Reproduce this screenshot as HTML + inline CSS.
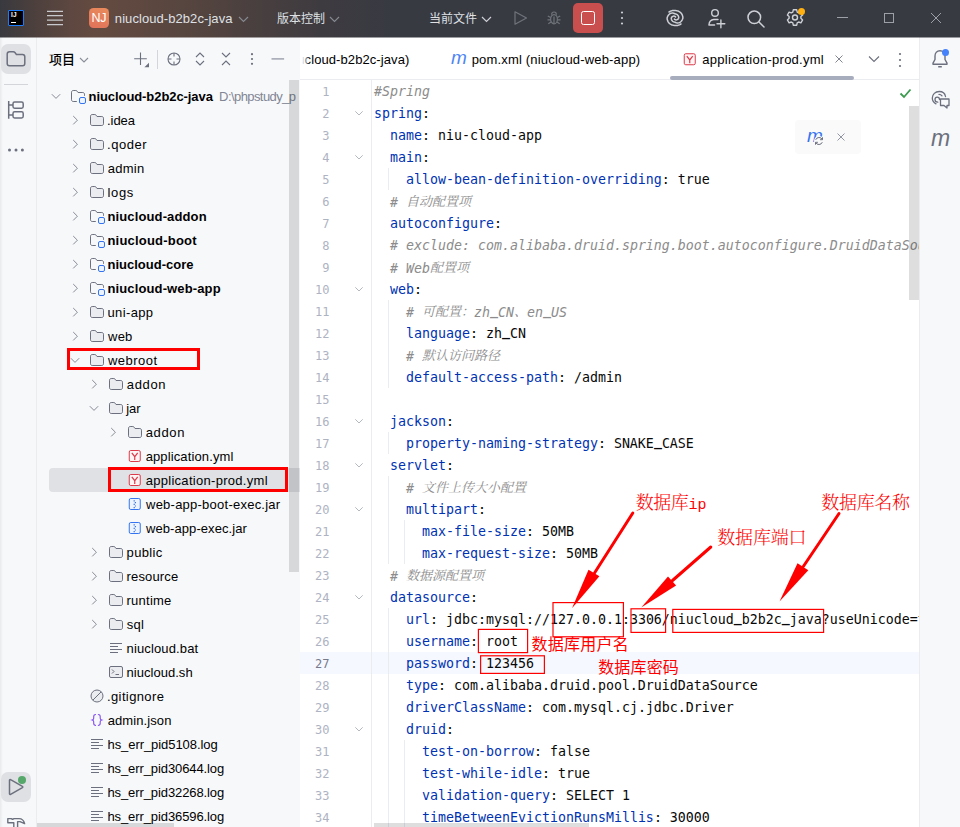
<!DOCTYPE html>
<html lang="zh-CN"><head><meta charset="utf-8"><title>niucloud-b2b2c-java – application-prod.yml</title>
<style>
*{box-sizing:border-box;margin:0;padding:0}
html,body{width:960px;height:827px;overflow:hidden;background:#fff}
body{position:relative;font-family:"Liberation Sans","Noto Sans CJK SC",sans-serif;font-size:13px;color:#000}
.abs,.ti,.tl,.ln,.cl,.fold,.guide,.sel{position:absolute}
svg{display:block;overflow:visible}
#title{position:absolute;left:0;top:0;width:960px;height:37px;background:linear-gradient(90deg,#38393f 0,#4a3f3d 30px,#5d4740 70px,#644b41 95px,#5e4840 140px,#54443f 200px,#483f3f 260px,#3e3b40 320px,#383a42 390px);color:#dfe1e5}
#title .t{position:absolute;top:0;height:38px;line-height:37px;font-size:13px;white-space:nowrap}
#tblend{position:absolute;left:0;top:37px;width:960px;height:1px;z-index:50;opacity:.5;background:linear-gradient(90deg,#38393f 0,#4a3f3d 30px,#5d4740 70px,#644b41 95px,#5e4840 140px,#54443f 200px,#483f3f 260px,#3e3b40 320px,#383a42 390px)}
#lstrip{position:absolute;left:0;top:37px;width:37px;height:790px;background:#f7f8fa;border-right:1px solid #ebecf0}
#proj{position:absolute;left:37px;top:37px;width:263px;height:790px;background:#f7f8fa;overflow:hidden}
#tree{position:absolute;left:-37px;top:-37px;width:337px;height:827px}
#editor{position:absolute;left:300px;top:37px;width:619px;height:790px;background:#fff;overflow:hidden}
#ed{position:absolute;left:-300px;top:-37px;width:919px;height:827px}
#rstrip{position:absolute;left:919px;top:37px;width:41px;height:790px;background:#f7f8fa;border-left:1px solid #ebecf0}
.tl{height:24px;line-height:25px;white-space:nowrap;font-size:13px;color:#000}
.tl.b{font-weight:bold}
.path{font-weight:normal;color:#818594}
.sel{left:49px;width:251px;height:24px;background:#dfe1e5;border-radius:4px 0 0 4px}
.ln{left:300px;width:29.500px;height:22px;line-height:22px;text-align:right;font-family:"DejaVu Sans Mono","Liberation Mono","Noto Serif CJK SC",monospace;font-size:12px;color:#aeb3c2}
.ln.cur{color:#767a8a}
.fold{left:351px}
.cl{left:374px;height:22px;line-height:22px;white-space:pre;font-family:"DejaVu Sans Mono","Liberation Mono","Noto Serif CJK SC",monospace;font-size:13.29px;color:#080808}
.k{color:#0033b3}
.u{position:relative;top:-2.500px;font-weight:bold}
.c{color:#8c8c8c;font-style:italic}
.cj{font-family:"Noto Serif CJK SC",serif;font-size:13px;position:relative;top:-1px}
.guide{width:1px;background:#ebecf0}
.red{position:absolute;border:1px solid #f00}
.red2{position:absolute;border:2px solid #f00}
.ann{position:absolute;color:#f00;white-space:nowrap}
</style></head><body>
<div id="title">
<div class="abs" style="left:8px;top:10px;width:16px;height:16px;background:#000;border:1px solid #1a7cff;border-radius:1px"></div>
<div class="abs" style="left:11px;top:12px;font:bold 6.500px/6px 'Liberation Sans',sans-serif;color:#fff;letter-spacing:.2px">IJ</div>
<div class="abs" style="left:11px;top:22px;width:5px;height:1px;background:#fff"></div>
<svg class="abs" style="left:47px;top:9px" width="16" height="18" viewBox="0 0 16 18"><path d="M0 2.300h16M0 6.700h16M0 11.100h16M0 15.600h16" stroke="#c8c9cc" stroke-width="1.300" fill="none"/></svg>
<div class="abs" style="left:89px;top:8px;width:20px;height:20px;border-radius:4.500px;background:linear-gradient(200deg,#e98b5c,#e0725a)"></div>
<div class="abs" style="left:89px;top:8px;width:20px;height:20px;line-height:21px;text-align:center;font-size:12.500px;color:#fff;letter-spacing:-.5px;text-indent:-.5px">NJ</div>
<div class="t" id="tt1" style="left:114.87px;letter-spacing:0.068px">niucloud-b2b2c-java</div>
<svg class="abs" style="left:238px;top:14px" width="11" height="10" viewBox="0 0 11 10"><path d="M1 3l4.500 4.500L10 3" fill="none" stroke="#868a91" stroke-width="1.100"/></svg>
<div class="t" id="tt2" style="left:277px;font-size:12px;top:1px">版本控制</div>
<svg class="abs" style="left:329px;top:14px" width="11" height="10" viewBox="0 0 11 10"><path d="M1 3l4.500 4.500L10 3" fill="none" stroke="#868a91" stroke-width="1.100"/></svg>
<div class="t" id="tt3" style="left:429px;font-size:12px;top:1px">当前文件</div>
<svg class="abs" style="left:481px;top:14px" width="11" height="10" viewBox="0 0 11 10"><path d="M1 3l4.500 4.500L10 3" fill="none" stroke="#ced0d6" stroke-width="1.200"/></svg>
<svg class="abs" style="left:513px;top:10px" width="16" height="16" viewBox="0 0 16 16"><path d="M2 1.800v12.400L13.500 8z" fill="none" stroke="#6f737a" stroke-width="1.200" stroke-linejoin="round"/></svg>
<svg class="abs" style="left:546px;top:10px" width="16" height="16" viewBox="0 0 16 16"><g fill="none" stroke="#6f737a" stroke-width="1.200"><ellipse cx="8" cy="9.200" rx="3.400" ry="4.600"/><path d="M5.600 4.800C5.600 3 6.600 2 8 2s2.400 1 2.400 2.800M4.600 7.500 1.800 6M11.400 7.500 14.200 6M4.600 9.800H1.500M11.400 9.800h3.100M5 12l-2.700 1.800M11 12l2.700 1.800M8 6.500v7"/></g></svg>
<div class="abs" style="left:573px;top:3px;width:30px;height:30px;border-radius:5px;background:#c94f4f"></div>
<div class="abs" style="left:581px;top:11px;width:14px;height:14px;border:1.600px solid #fff;border-radius:2.500px"></div>
<svg class="abs" style="left:620px;top:10px" width="4" height="16" viewBox="0 0 4 16"><circle cx="2" cy="2.500" r="1.100" fill="#ced0d6"/><circle cx="2" cy="8" r="1.100" fill="#ced0d6"/><circle cx="2" cy="13.500" r="1.100" fill="#ced0d6"/></svg>
<svg class="abs" style="left:667px;top:10px" width="16" height="16" viewBox="0 0 16 16"><path d="M2.03 2.00 L3.04 1.38 L4.12 0.91 L5.23 0.61 L6.35 0.46 L7.46 0.47 L8.54 0.53 L9.61 0.64 L10.66 0.90 L11.67 1.30 L12.62 1.83 L13.48 2.49 L14.23 3.28 L14.84 4.17 L15.32 5.13 L15.67 6.15 L15.86 7.20 L15.84 8.27 L15.50 9.28 L15.02 10.21 L14.43 11.04 L13.74 11.75 L12.97 12.34 L12.08 12.71 L11.15 12.88 L10.25 12.90 L9.41 12.77 L8.66 12.52 L8.00 12.17 L7.41 12.08 L6.84 11.91 L6.32 11.67 L5.83 11.36 L5.41 11.00 L5.04 10.58 L4.74 10.13 L4.52 9.65 L4.37 9.15 L4.29 8.63 L4.29 8.13 L4.47 7.64 L4.74 7.21 L5.07 6.85 L5.43 6.56 L5.82 6.35 L6.21 6.20 L6.59 6.12 L6.96 6.10 L7.30 6.14 L7.61 6.23 L7.88 6.37 L8.11 6.50 L8.30 6.63 L8.46 6.78 L8.58 6.95M13.97 14.00 L12.96 14.62 L11.88 15.09 L10.77 15.39 L9.65 15.54 L8.54 15.53 L7.46 15.47 L6.39 15.36 L5.34 15.10 L4.33 14.70 L3.38 14.17 L2.52 13.51 L1.77 12.72 L1.16 11.83 L0.68 10.87 L0.33 9.85 L0.14 8.80 L0.16 7.73 L0.50 6.72 L0.98 5.79 L1.57 4.96 L2.26 4.25 L3.03 3.66 L3.92 3.29 L4.85 3.12 L5.75 3.10 L6.59 3.23 L7.34 3.48 L8.00 3.83 L8.59 3.92 L9.16 4.09 L9.68 4.33 L10.17 4.64 L10.59 5.00 L10.96 5.42 L11.26 5.87 L11.48 6.35 L11.63 6.85 L11.71 7.37 L11.71 7.87 L11.53 8.36 L11.26 8.79 L10.93 9.15 L10.57 9.44 L10.18 9.65 L9.79 9.80 L9.41 9.88 L9.04 9.90 L8.70 9.86 L8.39 9.77 L8.12 9.63 L7.89 9.50 L7.70 9.37 L7.54 9.22 L7.42 9.05" fill="none" stroke="#ced0d6" stroke-width="1.500" stroke-linecap="round" stroke-linejoin="round"/></svg>
<svg class="abs" style="left:706px;top:7px" width="20" height="21" viewBox="0 0 20 21"><g fill="none" stroke="#ced0d6" stroke-width="1.400" stroke-linecap="round" stroke-linejoin="round"><circle cx="9" cy="5.900" r="3.300"/><path d="M8.600 18H2.900C3.200 15 5 12.700 7.800 12.500H12M11 16.750h7.800M14.900 12.900v7.800"/></g></svg>
<svg class="abs" style="left:746px;top:9px" width="20" height="20" viewBox="0 0 20 20"><g fill="none" stroke="#ced0d6" stroke-width="1.500" stroke-linecap="round"><circle cx="8.300" cy="8.300" r="6.300"/><path d="M13 13l5 5"/></g></svg>
<svg class="abs" style="left:785px;top:8px" width="20" height="20" viewBox="0 0 20 20"><g fill="none" stroke="#ced0d6" stroke-width="1.400" stroke-linejoin="round"><path d="M8.300 1.800h3.400l.5 2.300 1.500.8 2.200-.8 1.700 2.900-1.700 1.600v1.700l1.700 1.600-1.700 2.900-2.200-.8-1.500.8-.5 2.400H8.300l-.5-2.400-1.500-.8-2.200.8-1.700-2.900 1.700-1.600V8.600L2.400 7l1.700-2.900 2.200.8 1.500-.8z"/><circle cx="10" cy="9.500" r="2.500"/></g></svg>
<div class="abs" style="left:798px;top:8px;width:7px;height:7px;border-radius:50%;background:#ffaf0f"></div>
<div class="abs" style="left:837px;top:17px;width:11px;height:1px;background:#9da0a8"></div>
<div class="abs" style="left:884px;top:13px;width:10px;height:10px;border:1px solid #9da0a8"></div>
<svg class="abs" style="left:931px;top:13px" width="10" height="10" viewBox="0 0 10 10"><path d="M0 0l10 10M10 0L0 10" stroke="#9da0a8" stroke-width="1" fill="none"/></svg>
</div>

<div id="tblend"></div>
<div id="lstrip">
<div class="abs edge-shadow" style="left:0;top:0;width:3px;height:790px;background:linear-gradient(90deg,rgba(0,0,0,.06),rgba(0,0,0,0))"></div>
<div class="abs" style="left:1px;top:7px;width:30px;height:30px;border-radius:7px;background:#dfe0e4"></div>
<svg class="abs" style="left:6px;top:13px" width="20" height="18" viewBox="0 0 20 18"><path d="M1.200 4c0-1.300 1-2.300 2.300-2.300h3.800c.6 0 1.200.3 1.600.8l1.500 1.900h6.100c1.300 0 2.300 1 2.300 2.300v6.800c0 1.300-1 2.300-2.300 2.300h-13c-1.300 0-2.300-1-2.300-2.300z" fill="none" stroke="#6c707e" stroke-width="1.500"/></svg>
<div class="abs" style="left:4px;top:47px;width:24px;height:1px;background:#d3d5db"></div>
<svg class="abs" style="left:7px;top:63px" width="18" height="20" viewBox="0 0 18 20"><g fill="none" stroke="#6c707e" stroke-width="1.500"><path d="M1.700 1v17.800M1.700 4.900H6M1.700 15.100H6"/><rect x="6" y="2.100" width="10.200" height="6.100" rx="1.600"/><rect x="6" y="11.800" width="10.200" height="6.100" rx="1.600"/></g></svg>
<svg class="abs" style="left:7px;top:111px" width="18" height="4" viewBox="0 0 18 4"><circle cx="2.500" cy="2" r="1.500" fill="#6c707e"/><circle cx="9" cy="2" r="1.500" fill="#6c707e"/><circle cx="15.400" cy="2" r="1.500" fill="#6c707e"/></svg>
<div class="abs" style="left:1px;top:735px;width:30px;height:30px;border-radius:7px;background:#dfe0e4"></div>
<svg class="abs" style="left:8px;top:741px" width="17" height="18" viewBox="0 0 17 18"><path d="M1.500 2.300v13.400c0 .6.600.9 1.100.6l11.800-6.700c.5-.3.500-1 0-1.200L2.600 1.700c-.5-.3-1.100 0-1.100.6z" fill="none" stroke="#6c707e" stroke-width="1.500" stroke-linejoin="round"/></svg>
<div class="abs" style="left:18px;top:739px;width:8px;height:8px;border-radius:50%;background:#55a76a"></div>
<svg class="abs" style="left:7px;top:780px" width="19" height="12" viewBox="0 0 19 12"><path d="M6.800 11.500V5.800H.8V1.600H4.200L5.600 2.400 7 1.600H12C15 1.600 16.800 3.500 17.600 6.600L13 4.600H10.600V11.500" fill="none" stroke="#6c707e" stroke-width="1.400" stroke-linejoin="round"/></svg>
</div>

<div id="proj"><div id="tree">
<div class="abs" id="ph" style="left:49px;top:47px;height:26px;line-height:25px;font-weight:500;font-size:13px;font-family:'Liberation Sans','Noto Sans CJK SC',sans-serif">项目</div>
<svg class="abs" style="left:79px;top:55px" width="10" height="10" viewBox="0 0 10 10"><path d="M1 3l4 4 4-4" fill="none" stroke="#8a8e99" stroke-width="1.100"/></svg>
<svg class="abs" style="left:133px;top:51px" width="16" height="16" viewBox="0 0 16 16"><path d="M7.500 1.500v12.500M1.200 7.800h12.600" stroke="#6c707e" stroke-width="1.100" fill="none"/><path d="M16 11.800v4.400h-4.600z" fill="#6c707e"/></svg>
<div class="abs" style="left:157px;top:50px;width:1px;height:19px;background:#d3d5db"></div>
<svg class="abs" style="left:166px;top:51px" width="16" height="16" viewBox="0 0 16 16"><g fill="none" stroke="#6c707e" stroke-width="1.100"><circle cx="8" cy="8" r="6"/><path d="M8 2v3.500M8 10.500V14M2 8h3.500M10.500 8H14"/></g></svg>
<svg class="abs" style="left:192px;top:51px" width="16" height="16" viewBox="0 0 16 16"><path d="M4 6l4-4 4 4M4 10l4 4 4-4" fill="none" stroke="#6c707e" stroke-width="1.100"/></svg>
<svg class="abs" style="left:218px;top:51px" width="16" height="16" viewBox="0 0 16 16"><path d="M4 2l4 4 4-4M4 14l4-4 4 4" fill="none" stroke="#6c707e" stroke-width="1.100"/></svg>
<svg class="abs" style="left:250px;top:51px" width="4" height="16" viewBox="0 0 4 16"><circle cx="2" cy="3.200" r="1.100" fill="#6c707e"/><circle cx="2" cy="8" r="1.100" fill="#6c707e"/><circle cx="2" cy="12.800" r="1.100" fill="#6c707e"/></svg>
<svg class="abs" style="left:271px;top:56px" width="14" height="6" viewBox="0 0 14 6"><path d="M.5 2.900h12.600" stroke="#9a9eab" stroke-width="1.400" fill="none"/></svg>

<div class="ti" style="left:48px;top:88px"><svg width="16" height="16" viewBox="0 0 16 16" style=""><path d="M3.800 6.200 8 10.400 12.200 6.200" fill="none" stroke="#868a95" stroke-width="1"/></svg></div><div class="ti" style="left:70px;top:88px"><svg width="16" height="16" viewBox="0 0 16 16" style=""><path d="M6.800 13.500H3.200c-.9 0-1.700-.7-1.700-1.700V4.200c0-.9.7-1.700 1.700-1.700h2.600c.5 0 .9.2 1.200.6l1 1.400h4.800c.9 0 1.700.7 1.700 1.700v1.600" fill="none" stroke="#6c707e" stroke-width="1"/><rect x="9.500" y="9.500" width="6" height="6" rx="1.500" fill="#edf3ff" stroke="#3574f0" stroke-width="1"/></svg></div><div class="tl path" style="left:219.12px;letter-spacing:-0.579px;top:84px">D:\phpstudy_p</div><div class="tl b" id="tl0" style="left:88.57px;letter-spacing:-0.076px;top:84px">niucloud-b2b2c-java</div>
<div class="ti" style="left:67px;top:112px"><svg width="16" height="16" viewBox="0 0 16 16" style=""><path d="M6.200 4 10.400 8.200 6.200 12.400" fill="none" stroke="#868a95" stroke-width="1"/></svg></div><div class="ti" style="left:89px;top:112px"><svg width="16" height="16" viewBox="0 0 16 16" style=""><path d="M1.5 4.2c0-.9.7-1.7 1.7-1.7h2.6c.5 0 .9.2 1.2.6l1 1.4h4.8c.9 0 1.7.7 1.7 1.7v5.6c0 .9-.7 1.7-1.7 1.7H3.200c-.9 0-1.700-.7-1.700-1.700z" fill="#ebecf0" stroke="#6c707e" stroke-width="1"/></svg></div><div class="tl" id="tl1" style="left:107.01px;letter-spacing:-0.053px;top:108px">.idea</div>
<div class="ti" style="left:67px;top:136px"><svg width="16" height="16" viewBox="0 0 16 16" style=""><path d="M6.200 4 10.400 8.200 6.200 12.400" fill="none" stroke="#868a95" stroke-width="1"/></svg></div><div class="ti" style="left:89px;top:136px"><svg width="16" height="16" viewBox="0 0 16 16" style=""><path d="M1.5 4.2c0-.9.7-1.7 1.7-1.7h2.6c.5 0 .9.2 1.2.6l1 1.4h4.8c.9 0 1.7.7 1.7 1.7v5.6c0 .9-.7 1.7-1.7 1.7H3.200c-.9 0-1.700-.7-1.700-1.700z" fill="#ebecf0" stroke="#6c707e" stroke-width="1"/></svg></div><div class="tl" id="tl2" style="left:107.01px;letter-spacing:0.527px;top:132px">.qoder</div>
<div class="ti" style="left:67px;top:160px"><svg width="16" height="16" viewBox="0 0 16 16" style=""><path d="M6.200 4 10.400 8.200 6.200 12.400" fill="none" stroke="#868a95" stroke-width="1"/></svg></div><div class="ti" style="left:89px;top:160px"><svg width="16" height="16" viewBox="0 0 16 16" style=""><path d="M1.5 4.2c0-.9.7-1.7 1.7-1.7h2.6c.5 0 .9.2 1.2.6l1 1.4h4.8c.9 0 1.7.7 1.7 1.7v5.6c0 .9-.7 1.7-1.7 1.7H3.200c-.9 0-1.700-.7-1.700-1.700z" fill="#ebecf0" stroke="#6c707e" stroke-width="1"/></svg></div><div class="tl" id="tl3" style="left:107.67px;letter-spacing:0.288px;top:156px">admin</div>
<div class="ti" style="left:67px;top:184px"><svg width="16" height="16" viewBox="0 0 16 16" style=""><path d="M6.200 4 10.400 8.200 6.200 12.400" fill="none" stroke="#868a95" stroke-width="1"/></svg></div><div class="ti" style="left:89px;top:184px"><svg width="16" height="16" viewBox="0 0 16 16" style=""><path d="M1.5 4.2c0-.9.7-1.7 1.7-1.7h2.6c.5 0 .9.2 1.2.6l1 1.4h4.8c.9 0 1.7.7 1.7 1.7v5.6c0 .9-.7 1.7-1.7 1.7H3.200c-.9 0-1.700-.7-1.700-1.700z" fill="#ebecf0" stroke="#6c707e" stroke-width="1"/></svg></div><div class="tl" id="tl4" style="left:107.47px;letter-spacing:0.669px;top:180px">logs</div>
<div class="ti" style="left:67px;top:208px"><svg width="16" height="16" viewBox="0 0 16 16" style=""><path d="M6.200 4 10.400 8.200 6.200 12.400" fill="none" stroke="#868a95" stroke-width="1"/></svg></div><div class="ti" style="left:89px;top:208px"><svg width="16" height="16" viewBox="0 0 16 16" style=""><path d="M6.800 13.500H3.200c-.9 0-1.700-.7-1.700-1.700V4.200c0-.9.7-1.700 1.700-1.700h2.600c.5 0 .9.2 1.200.6l1 1.400h4.800c.9 0 1.700.7 1.700 1.700v1.600" fill="none" stroke="#6c707e" stroke-width="1"/><rect x="9.500" y="9.500" width="6" height="6" rx="1.500" fill="#edf3ff" stroke="#3574f0" stroke-width="1"/></svg></div><div class="tl b" id="tl5" style="left:107.47px;letter-spacing:0.125px;top:204px">niucloud-addon</div>
<div class="ti" style="left:67px;top:232px"><svg width="16" height="16" viewBox="0 0 16 16" style=""><path d="M6.200 4 10.400 8.200 6.200 12.400" fill="none" stroke="#868a95" stroke-width="1"/></svg></div><div class="ti" style="left:89px;top:232px"><svg width="16" height="16" viewBox="0 0 16 16" style=""><path d="M6.800 13.500H3.200c-.9 0-1.700-.7-1.700-1.700V4.200c0-.9.7-1.700 1.700-1.700h2.600c.5 0 .9.2 1.200.6l1 1.400h4.800c.9 0 1.700.7 1.700 1.700v1.600" fill="none" stroke="#6c707e" stroke-width="1"/><rect x="9.500" y="9.500" width="6" height="6" rx="1.500" fill="#edf3ff" stroke="#3574f0" stroke-width="1"/></svg></div><div class="tl b" id="tl6" style="left:107.47px;letter-spacing:0.199px;top:228px">niucloud-boot</div>
<div class="ti" style="left:67px;top:256px"><svg width="16" height="16" viewBox="0 0 16 16" style=""><path d="M6.200 4 10.400 8.200 6.200 12.400" fill="none" stroke="#868a95" stroke-width="1"/></svg></div><div class="ti" style="left:89px;top:256px"><svg width="16" height="16" viewBox="0 0 16 16" style=""><path d="M6.800 13.500H3.200c-.9 0-1.700-.7-1.700-1.700V4.200c0-.9.7-1.700 1.700-1.700h2.600c.5 0 .9.2 1.200.6l1 1.400h4.800c.9 0 1.700.7 1.700 1.700v1.600" fill="none" stroke="#6c707e" stroke-width="1"/><rect x="9.500" y="9.500" width="6" height="6" rx="1.500" fill="#edf3ff" stroke="#3574f0" stroke-width="1"/></svg></div><div class="tl b" id="tl7" style="left:107.47px;letter-spacing:0.004px;top:252px">niucloud-core</div>
<div class="ti" style="left:67px;top:280px"><svg width="16" height="16" viewBox="0 0 16 16" style=""><path d="M6.200 4 10.400 8.200 6.200 12.400" fill="none" stroke="#868a95" stroke-width="1"/></svg></div><div class="ti" style="left:89px;top:280px"><svg width="16" height="16" viewBox="0 0 16 16" style=""><path d="M6.800 13.500H3.200c-.9 0-1.700-.7-1.700-1.700V4.200c0-.9.7-1.700 1.700-1.700h2.600c.5 0 .9.2 1.200.6l1 1.400h4.800c.9 0 1.700.7 1.700 1.700v1.600" fill="none" stroke="#6c707e" stroke-width="1"/><rect x="9.500" y="9.500" width="6" height="6" rx="1.500" fill="#edf3ff" stroke="#3574f0" stroke-width="1"/></svg></div><div class="tl b" id="tl8" style="left:107.47px;letter-spacing:0.126px;top:276px">niucloud-web-app</div>
<div class="ti" style="left:67px;top:304px"><svg width="16" height="16" viewBox="0 0 16 16" style=""><path d="M6.200 4 10.400 8.200 6.200 12.400" fill="none" stroke="#868a95" stroke-width="1"/></svg></div><div class="ti" style="left:89px;top:304px"><svg width="16" height="16" viewBox="0 0 16 16" style=""><path d="M1.5 4.2c0-.9.7-1.7 1.7-1.7h2.6c.5 0 .9.2 1.2.6l1 1.4h4.8c.9 0 1.7.7 1.7 1.7v5.6c0 .9-.7 1.7-1.7 1.7H3.200c-.9 0-1.700-.7-1.700-1.700z" fill="#ebecf0" stroke="#6c707e" stroke-width="1"/></svg></div><div class="tl" id="tl9" style="left:107.50px;letter-spacing:0.372px;top:300px">uni-app</div>
<div class="ti" style="left:67px;top:328px"><svg width="16" height="16" viewBox="0 0 16 16" style=""><path d="M6.200 4 10.400 8.200 6.200 12.400" fill="none" stroke="#868a95" stroke-width="1"/></svg></div><div class="ti" style="left:89px;top:328px"><svg width="16" height="16" viewBox="0 0 16 16" style=""><path d="M1.5 4.2c0-.9.7-1.7 1.7-1.7h2.6c.5 0 .9.2 1.2.6l1 1.4h4.8c.9 0 1.7.7 1.7 1.7v5.6c0 .9-.7 1.7-1.7 1.7H3.200c-.9 0-1.700-.7-1.700-1.700z" fill="#ebecf0" stroke="#6c707e" stroke-width="1"/></svg></div><div class="tl" id="tl10" style="left:108.02px;letter-spacing:0.242px;top:324px">web</div>
<div class="ti" style="left:67px;top:352px"><svg width="16" height="16" viewBox="0 0 16 16" style=""><path d="M3.800 6.200 8 10.400 12.200 6.200" fill="none" stroke="#868a95" stroke-width="1"/></svg></div><div class="ti" style="left:89px;top:352px"><svg width="16" height="16" viewBox="0 0 16 16" style=""><path d="M1.5 4.2c0-.9.7-1.7 1.7-1.7h2.6c.5 0 .9.2 1.2.6l1 1.4h4.8c.9 0 1.7.7 1.7 1.7v5.6c0 .9-.7 1.7-1.7 1.7H3.200c-.9 0-1.700-.7-1.700-1.700z" fill="#ebecf0" stroke="#6c707e" stroke-width="1"/></svg></div><div class="tl" id="tl11" style="left:108.02px;letter-spacing:0.456px;top:348px">webroot</div>
<div class="ti" style="left:86px;top:376px"><svg width="16" height="16" viewBox="0 0 16 16" style=""><path d="M6.200 4 10.400 8.200 6.200 12.400" fill="none" stroke="#868a95" stroke-width="1"/></svg></div><div class="ti" style="left:108px;top:376px"><svg width="16" height="16" viewBox="0 0 16 16" style=""><path d="M1.5 4.2c0-.9.7-1.7 1.7-1.7h2.6c.5 0 .9.2 1.2.6l1 1.4h4.8c.9 0 1.7.7 1.7 1.7v5.6c0 .9-.7 1.7-1.7 1.7H3.200c-.9 0-1.700-.7-1.700-1.700z" fill="#ebecf0" stroke="#6c707e" stroke-width="1"/></svg></div><div class="tl" id="tl12" style="left:126.77px;letter-spacing:0.664px;top:372px">addon</div>
<div class="ti" style="left:86px;top:400px"><svg width="16" height="16" viewBox="0 0 16 16" style=""><path d="M3.800 6.200 8 10.400 12.200 6.200" fill="none" stroke="#868a95" stroke-width="1"/></svg></div><div class="ti" style="left:108px;top:400px"><svg width="16" height="16" viewBox="0 0 16 16" style=""><path d="M1.5 4.2c0-.9.7-1.7 1.7-1.7h2.6c.5 0 .9.2 1.2.6l1 1.4h4.8c.9 0 1.7.7 1.7 1.7v5.6c0 .9-.7 1.7-1.7 1.7H3.200c-.9 0-1.700-.7-1.700-1.700z" fill="#ebecf0" stroke="#6c707e" stroke-width="1"/></svg></div><div class="tl" id="tl13" style="left:126.21px;letter-spacing:-0.026px;top:396px">jar</div>
<div class="ti" style="left:105px;top:424px"><svg width="16" height="16" viewBox="0 0 16 16" style=""><path d="M6.200 4 10.400 8.200 6.200 12.400" fill="none" stroke="#868a95" stroke-width="1"/></svg></div><div class="ti" style="left:127px;top:424px"><svg width="16" height="16" viewBox="0 0 16 16" style=""><path d="M1.5 4.2c0-.9.7-1.7 1.7-1.7h2.6c.5 0 .9.2 1.2.6l1 1.4h4.8c.9 0 1.7.7 1.7 1.7v5.6c0 .9-.7 1.7-1.7 1.7H3.200c-.9 0-1.700-.7-1.700-1.700z" fill="#ebecf0" stroke="#6c707e" stroke-width="1"/></svg></div><div class="tl" id="tl14" style="left:145.67px;letter-spacing:0.664px;top:420px">addon</div>
<div class="ti" style="left:127px;top:448px"><svg width="16" height="16" viewBox="0 0 16 16" style=""><rect x="2.250" y="2.500" width="11" height="11" rx="1.500" fill="#fff5f5" stroke="#db3b4b" stroke-width="1"/><path d="M4.800 4.900 7.750 8.700l2.950-3.800M7.750 8.700v3.400" fill="none" stroke="#db3b4b" stroke-width="1.200"/></svg></div><div class="tl" id="tl15" style="left:145.67px;letter-spacing:0.122px;top:444px">application.yml</div>
<div class="sel" style="top:468px"></div><div class="ti" style="left:127px;top:472px"><svg width="16" height="16" viewBox="0 0 16 16" style=""><rect x="2.250" y="2.500" width="11" height="11" rx="1.500" fill="#fff5f5" stroke="#db3b4b" stroke-width="1"/><path d="M4.800 4.900 7.750 8.700l2.950-3.800M7.750 8.700v3.400" fill="none" stroke="#db3b4b" stroke-width="1.200"/></svg></div><div class="tl" id="tl16" style="left:145.67px;letter-spacing:0.292px;top:468px">application-prod.yml</div>
<div class="ti" style="left:127px;top:496px"><svg width="16" height="16" viewBox="0 0 16 16" style=""><rect x="2.250" y="2.500" width="11" height="11" rx="1.500" fill="#edf3ff" stroke="#3574f0" stroke-width="1"/><path d="M6.600 4.300h1.200v1.200H6.600zM7.800 6h1.200v1.200H7.800zM6.600 7.700h1.200v1.200H6.600zM7.800 9.400h1.200v1.200H7.800zM6.600 11.100h1.200v1.100H6.600z" fill="#3574f0"/></svg></div><div class="tl" id="tl17" style="left:146.02px;letter-spacing:0.239px;top:492px">web-app-boot-exec.jar</div>
<div class="ti" style="left:127px;top:520px"><svg width="16" height="16" viewBox="0 0 16 16" style=""><rect x="2.250" y="2.500" width="11" height="11" rx="1.500" fill="#edf3ff" stroke="#3574f0" stroke-width="1"/><path d="M6.600 4.300h1.200v1.200H6.600zM7.800 6h1.200v1.200H7.800zM6.600 7.700h1.200v1.200H6.600zM7.800 9.400h1.200v1.200H7.800zM6.600 11.100h1.200v1.100H6.600z" fill="#3574f0"/></svg></div><div class="tl" id="tl18" style="left:146.02px;letter-spacing:0.075px;top:516px">web-app-exec.jar</div>
<div class="ti" style="left:86px;top:544px"><svg width="16" height="16" viewBox="0 0 16 16" style=""><path d="M6.200 4 10.400 8.200 6.200 12.400" fill="none" stroke="#868a95" stroke-width="1"/></svg></div><div class="ti" style="left:108px;top:544px"><svg width="16" height="16" viewBox="0 0 16 16" style=""><path d="M1.5 4.2c0-.9.7-1.7 1.7-1.7h2.6c.5 0 .9.2 1.2.6l1 1.4h4.8c.9 0 1.7.7 1.7 1.7v5.6c0 .9-.7 1.7-1.7 1.7H3.200c-.9 0-1.700-.7-1.700-1.700z" fill="#ebecf0" stroke="#6c707e" stroke-width="1"/></svg></div><div class="tl" id="tl19" style="left:126.57px;letter-spacing:0.364px;top:540px">public</div>
<div class="ti" style="left:86px;top:568px"><svg width="16" height="16" viewBox="0 0 16 16" style=""><path d="M6.200 4 10.400 8.200 6.200 12.400" fill="none" stroke="#868a95" stroke-width="1"/></svg></div><div class="ti" style="left:108px;top:568px"><svg width="16" height="16" viewBox="0 0 16 16" style=""><path d="M1.5 4.2c0-.9.7-1.7 1.7-1.7h2.6c.5 0 .9.2 1.2.6l1 1.4h4.8c.9 0 1.7.7 1.7 1.7v5.6c0 .9-.7 1.7-1.7 1.7H3.200c-.9 0-1.700-.7-1.700-1.700z" fill="#ebecf0" stroke="#6c707e" stroke-width="1"/></svg></div><div class="tl" id="tl20" style="left:126.57px;letter-spacing:0.139px;top:564px">resource</div>
<div class="ti" style="left:86px;top:592px"><svg width="16" height="16" viewBox="0 0 16 16" style=""><path d="M6.200 4 10.400 8.200 6.200 12.400" fill="none" stroke="#868a95" stroke-width="1"/></svg></div><div class="ti" style="left:108px;top:592px"><svg width="16" height="16" viewBox="0 0 16 16" style=""><path d="M1.5 4.2c0-.9.7-1.7 1.7-1.7h2.6c.5 0 .9.2 1.2.6l1 1.4h4.8c.9 0 1.7.7 1.7 1.7v5.6c0 .9-.7 1.7-1.7 1.7H3.200c-.9 0-1.700-.7-1.700-1.700z" fill="#ebecf0" stroke="#6c707e" stroke-width="1"/></svg></div><div class="tl" id="tl21" style="left:126.57px;letter-spacing:0.231px;top:588px">runtime</div>
<div class="ti" style="left:86px;top:616px"><svg width="16" height="16" viewBox="0 0 16 16" style=""><path d="M6.200 4 10.400 8.200 6.200 12.400" fill="none" stroke="#868a95" stroke-width="1"/></svg></div><div class="ti" style="left:108px;top:616px"><svg width="16" height="16" viewBox="0 0 16 16" style=""><path d="M1.5 4.2c0-.9.7-1.7 1.7-1.7h2.6c.5 0 .9.2 1.2.6l1 1.4h4.8c.9 0 1.7.7 1.7 1.7v5.6c0 .9-.7 1.7-1.7 1.7H3.200c-.9 0-1.700-.7-1.700-1.700z" fill="#ebecf0" stroke="#6c707e" stroke-width="1"/></svg></div><div class="tl" id="tl22" style="left:126.77px;letter-spacing:0.312px;top:612px">sql</div>
<div class="ti" style="left:108px;top:640px"><svg width="16" height="16" viewBox="0 0 16 16" style=""><path d="M2 3.500h12M2 6.500h8M2 9.500h12M2 12.500h8" stroke="#6c707e" stroke-width="1" fill="none"/></svg></div><div class="tl" id="tl23" style="left:126.57px;letter-spacing:0.136px;top:636px">niucloud.bat</div>
<div class="ti" style="left:108px;top:664px"><svg width="16" height="16" viewBox="0 0 16 16" style=""><rect x="1.500" y="2.500" width="13" height="11" rx="1.500" fill="#ebecf0" stroke="#6c707e" stroke-width="1"/><path d="M4 5.500l2 2-2 2M7.500 10.500h3.500" fill="none" stroke="#6c707e" stroke-width="1"/></svg></div><div class="tl" id="tl24" style="left:126.57px;letter-spacing:0.028px;top:660px">niucloud.sh</div>
<div class="ti" style="left:89px;top:688px"><svg width="16" height="16" viewBox="0 0 16 16" style=""><circle cx="8" cy="8" r="6" fill="#ebecf0" stroke="#6c707e" stroke-width="1"/><path d="M3.800 12.200l8.400-8.400" stroke="#6c707e" stroke-width="1"/></svg></div><div class="tl" id="tl25" style="left:107.01px;letter-spacing:0.382px;top:684px">.gitignore</div>
<div class="ti" style="left:89px;top:712px"><svg width="16" height="16" viewBox="0 0 16 16" style=""><path d="M7 2.500c-1.800 0-2.300.7-2.300 1.900v1.800c0 .9-.5 1.500-1.500 1.800 1 .3 1.500.9 1.500 1.800v1.800c0 1.200.5 1.900 2.300 1.900M8.900 2.500c1.800 0 2.300.7 2.300 1.900v1.800c0 .9.500 1.500 1.500 1.800-1 .3-1.500.9-1.500 1.800v1.800c0 1.200-.5 1.900-2.300 1.900" fill="none" stroke="#834df0" stroke-width="1.100"/></svg></div><div class="tl" id="tl26" style="left:107.67px;letter-spacing:0.095px;top:708px">admin.json</div>
<div class="ti" style="left:89px;top:736px"><svg width="16" height="16" viewBox="0 0 16 16" style=""><path d="M2 3.500h12M2 6.500h8M2 9.500h12M2 12.500h8" stroke="#6c707e" stroke-width="1" fill="none"/></svg></div><div class="tl" id="tl27" style="left:107.47px;letter-spacing:-0.066px;top:732px">hs_err_pid5108.log</div>
<div class="ti" style="left:89px;top:760px"><svg width="16" height="16" viewBox="0 0 16 16" style=""><path d="M2 3.500h12M2 6.500h8M2 9.500h12M2 12.500h8" stroke="#6c707e" stroke-width="1" fill="none"/></svg></div><div class="tl" id="tl28" style="left:107.47px;letter-spacing:-0.102px;top:756px">hs_err_pid30644.log</div>
<div class="ti" style="left:89px;top:784px"><svg width="16" height="16" viewBox="0 0 16 16" style=""><path d="M2 3.500h12M2 6.500h8M2 9.500h12M2 12.500h8" stroke="#6c707e" stroke-width="1" fill="none"/></svg></div><div class="tl" id="tl29" style="left:107.47px;letter-spacing:-0.102px;top:780px">hs_err_pid32268.log</div>
<div class="ti" style="left:89px;top:808px"><svg width="16" height="16" viewBox="0 0 16 16" style=""><path d="M2 3.500h12M2 6.500h8M2 9.500h12M2 12.500h8" stroke="#6c707e" stroke-width="1" fill="none"/></svg></div><div class="tl" id="tl30" style="left:107.47px;letter-spacing:-0.102px;top:804px">hs_err_pid36596.log</div>
<div class="abs" style="left:289px;top:80px;width:10px;height:492px;background:rgba(0,0,0,.13)"></div>
<div class="abs" style="left:37px;top:823px;width:137px;height:4px;background:rgba(0,0,0,.13)"></div>
<div class="abs" style="left:67px;top:348px;width:133px;height:22px;border:3px solid #f00"></div><div class="abs" style="left:108px;top:467px;width:180px;height:25px;border:3px solid #f00"></div>

</div></div>
<div id="editor"><div id="ed">
<div class="abs" style="left:300px;top:652px;width:619px;height:22px;background:#f5f8fe"></div>
<div class="abs" style="left:371px;top:80px;width:1px;height:747px;background:#ebecf0"></div>
<div class="ln" style="top:81px">1</div>
<div class="cl" style="top:81px"><span class="c">#Spring</span></div>
<div class="ln" style="top:103px">2</div>
<div class="fold" style="top:105px"><svg width="16" height="16" viewBox="0 0 16 16" style=""><path d="M4.300 6.300 8 10l3.700-3.700" fill="none" stroke="#b4b8bf" stroke-width="1"/></svg></div>
<div class="cl" style="top:103px"><span class="k">spring</span>:</div>
<div class="ln" style="top:125px">3</div>
<div class="cl" style="top:125px">  <span class="k">name</span>: niu-cloud-app</div>
<div class="ln" style="top:147px">4</div>
<div class="fold" style="top:149px"><svg width="16" height="16" viewBox="0 0 16 16" style=""><path d="M4.300 6.300 8 10l3.700-3.700" fill="none" stroke="#b4b8bf" stroke-width="1"/></svg></div>
<div class="cl" style="top:147px">  <span class="k">main</span>:</div>
<div class="ln" style="top:169px">5</div>
<div class="cl" style="top:169px">    <span class="k">allow-bean-definition-overriding</span>: true</div>
<div class="ln" style="top:191px">6</div>
<div class="cl" style="top:191px">  <span class="c"># </span><span class="c cj">自动配置项</span></div>
<div class="ln" style="top:213px">7</div>
<div class="cl" style="top:213px">  <span class="k">autoconfigure</span>:</div>
<div class="ln" style="top:235px">8</div>
<div class="cl" style="top:235px">  <span class="c"># exclude: com.alibaba.druid.spring.boot.autoconfigure.DruidDataSource</span></div>
<div class="ln" style="top:257px">9</div>
<div class="cl" style="top:257px">  <span class="c"># Web</span><span class="c cj">配置项</span></div>
<div class="ln" style="top:279px">10</div>
<div class="fold" style="top:281px"><svg width="16" height="16" viewBox="0 0 16 16" style=""><path d="M4.300 6.300 8 10l3.700-3.700" fill="none" stroke="#b4b8bf" stroke-width="1"/></svg></div>
<div class="cl" style="top:279px">  <span class="k">web</span>:</div>
<div class="ln" style="top:301px">11</div>
<div class="cl" style="top:301px">    <span class="c"># </span><span class="c cj">可配置：</span><span class="c">zh<span class="u">_</span>CN</span><span class="c cj">、</span><span class="c">en<span class="u">_</span>US</span></div>
<div class="ln" style="top:323px">12</div>
<div class="cl" style="top:323px">    <span class="k">language</span>: zh<span class="u">_</span>CN</div>
<div class="ln" style="top:345px">13</div>
<div class="cl" style="top:345px">    <span class="c"># </span><span class="c cj">默认访问路径</span></div>
<div class="ln" style="top:367px">14</div>
<div class="cl" style="top:367px">    <span class="k">default-access-path</span>: /admin</div>
<div class="ln" style="top:389px">15</div>
<div class="cl" style="top:389px"></div>
<div class="ln" style="top:411px">16</div>
<div class="fold" style="top:413px"><svg width="16" height="16" viewBox="0 0 16 16" style=""><path d="M4.300 6.300 8 10l3.700-3.700" fill="none" stroke="#b4b8bf" stroke-width="1"/></svg></div>
<div class="cl" style="top:411px">  <span class="k">jackson</span>:</div>
<div class="ln" style="top:433px">17</div>
<div class="cl" style="top:433px">    <span class="k">property-naming-strategy</span>: SNAKE<span class="u">_</span>CASE</div>
<div class="ln" style="top:455px">18</div>
<div class="fold" style="top:457px"><svg width="16" height="16" viewBox="0 0 16 16" style=""><path d="M4.300 6.300 8 10l3.700-3.700" fill="none" stroke="#b4b8bf" stroke-width="1"/></svg></div>
<div class="cl" style="top:455px">  <span class="k">servlet</span>:</div>
<div class="ln" style="top:477px">19</div>
<div class="cl" style="top:477px">    <span class="c"># </span><span class="c cj">文件上传大小配置</span></div>
<div class="ln" style="top:499px">20</div>
<div class="fold" style="top:501px"><svg width="16" height="16" viewBox="0 0 16 16" style=""><path d="M4.300 6.300 8 10l3.700-3.700" fill="none" stroke="#b4b8bf" stroke-width="1"/></svg></div>
<div class="cl" style="top:499px">    <span class="k">multipart</span>:</div>
<div class="ln" style="top:521px">21</div>
<div class="cl" style="top:521px">      <span class="k">max-file-size</span>: 50MB</div>
<div class="ln" style="top:543px">22</div>
<div class="cl" style="top:543px">      <span class="k">max-request-size</span>: 50MB</div>
<div class="ln" style="top:565px">23</div>
<div class="cl" style="top:565px">  <span class="c"># </span><span class="c cj">数据源配置项</span></div>
<div class="ln" style="top:587px">24</div>
<div class="fold" style="top:589px"><svg width="16" height="16" viewBox="0 0 16 16" style=""><path d="M4.300 6.300 8 10l3.700-3.700" fill="none" stroke="#b4b8bf" stroke-width="1"/></svg></div>
<div class="cl" style="top:587px">  <span class="k">datasource</span>:</div>
<div class="ln" style="top:609px">25</div>
<div class="cl" style="top:609px">    <span class="k">url</span>: jdbc:mysql://127.0.0.1:3306/niucloud<span class="u">_</span>b2b2c<span class="u">_</span>java?useUnicode=true</div>
<div class="ln" style="top:631px">26</div>
<div class="cl" style="top:631px">    <span class="k">username</span>: root</div>
<div class="ln cur" style="top:653px">27</div>
<div class="cl" style="top:653px">    <span class="k">password</span>: 123456</div>
<div class="ln" style="top:675px">28</div>
<div class="cl" style="top:675px">    <span class="k">type</span>: com.alibaba.druid.pool.DruidDataSource</div>
<div class="ln" style="top:697px">29</div>
<div class="cl" style="top:697px">    <span class="k">driverClassName</span>: com.mysql.cj.jdbc.Driver</div>
<div class="ln" style="top:719px">30</div>
<div class="fold" style="top:721px"><svg width="16" height="16" viewBox="0 0 16 16" style=""><path d="M4.300 6.300 8 10l3.700-3.700" fill="none" stroke="#b4b8bf" stroke-width="1"/></svg></div>
<div class="cl" style="top:719px">    <span class="k">druid</span>:</div>
<div class="ln" style="top:741px">31</div>
<div class="cl" style="top:741px">      <span class="k">test-on-borrow</span>: false</div>
<div class="ln" style="top:763px">32</div>
<div class="cl" style="top:763px">      <span class="k">test-while-idle</span>: true</div>
<div class="ln" style="top:785px">33</div>
<div class="cl" style="top:785px">      <span class="k">validation-query</span>: SELECT 1</div>
<div class="ln" style="top:807px">34</div>
<div class="cl" style="top:807px">      <span class="k">timeBetweenEvictionRunsMillis</span>: 30000</div>
<div class="guide" style="left:388px;top:168px;height:22px"></div>
<div class="guide" style="left:388px;top:300px;height:88px"></div>
<div class="guide" style="left:388px;top:432px;height:22px"></div>
<div class="guide" style="left:388px;top:476px;height:88px"></div>
<div class="guide" style="left:404px;top:520px;height:44px"></div>
<div class="guide" style="left:388px;top:608px;height:242px"></div>
<div class="guide" style="left:404px;top:740px;height:110px"></div>
<div class="abs" style="left:300px;top:37px;width:619px;height:43px;background:#fff;border-bottom:1px solid #ebecf0"></div>
<div class="abs" id="tab1" style="left:300px;top:37px;width:112px;height:42px;overflow:hidden"><div id="tab1t" style="position:absolute;left:4.59px;letter-spacing:0.086px;top:1px;line-height:44px;font-size:13px;white-space:nowrap"><span style="position:absolute;right:100%;top:0">niu</span>cloud-b2b2c-java)</div><div style="position:absolute;left:0;top:0;width:10px;height:42px;background:linear-gradient(90deg,#fff 20%,rgba(255,255,255,0))"></div></div>
<div class="abs" style="left:451px;top:46px;font:italic 19px/24px 'Liberation Sans',sans-serif;color:#4d85f5">m</div>
<div class="abs" id="tab2t" style="left:471.67px;letter-spacing:0.180px;top:38px;line-height:44px;font-size:13px;white-space:nowrap;color:#000">pom.xml (niucloud-web-app)</div>
<svg class="abs" style="left:682px;top:51px" width="16" height="16" viewBox="0 0 16 16"><rect x="2.250" y="2.750" width="11" height="11" rx="1.500" fill="#fff5f5" stroke="#db3b4b" stroke-width="1"/><path d="M4.800 5.150 7.750 8.950l2.950-3.800M7.750 8.950v3.400" fill="none" stroke="#db3b4b" stroke-width="1.200"/></svg>
<div class="abs" id="tab3t" style="left:702.37px;letter-spacing:0.266px;top:38px;line-height:44px;font-size:13px;white-space:nowrap;color:#000">application-prod.yml</div>
<svg class="abs" style="left:835px;top:55px" width="8" height="8" viewBox="0 0 8 8"><path d="M.5.500l7 7M7.500.500l-7 7" stroke="#818594" stroke-width="1" fill="none"/></svg>
<svg class="abs" style="left:868px;top:54px" width="12" height="10" viewBox="0 0 12 10"><path d="M1 2.500l5 5 5-5" fill="none" stroke="#6c707e" stroke-width="1.100"/></svg>
<svg class="abs" style="left:898px;top:52px" width="4" height="16" viewBox="0 0 4 16"><circle cx="2" cy="2" r="1.100" fill="#6c707e"/><circle cx="2" cy="8" r="1.100" fill="#6c707e"/><circle cx="2" cy="14" r="1.100" fill="#6c707e"/></svg>
<div class="abs" style="left:670px;top:76px;width:184px;height:4px;border-radius:2px;background:#a8adbd"></div>
<svg class="abs" style="left:899px;top:88px" width="13" height="11" viewBox="0 0 13 11"><path d="M1.500 5.500l3.500 3.500L11.500 1.500" fill="none" stroke="#3c9a4f" stroke-width="1.800"/></svg>
<div class="abs" style="left:909px;top:106px;width:10px;height:194px;background:rgba(0,0,0,.13)"></div>
<div class="abs" style="left:795px;top:120px;width:66px;height:34px;border-radius:4px;background:#fafafb"></div>
<div class="abs" style="left:807px;top:126px;font:italic 19px/20px 'Liberation Sans',sans-serif;color:#3574f0">m</div>
<svg class="abs" style="left:814px;top:136px" width="10" height="10" viewBox="0 0 10 10"><circle cx="5" cy="5" r="5" fill="#fafafb"/><path d="M8.300 3.500A3.600 3.600 0 0 0 1.700 3.800M1.700 6.500a3.600 3.600 0 0 0 6.600-.3M8.500 1.300v2.400H6.100M1.500 8.700V6.300h2.400" fill="none" stroke="#6c707e" stroke-width="1"/></svg>
<svg class="abs" style="left:837px;top:133px" width="8" height="8" viewBox="0 0 8 8"><path d="M.5.500l7 7M7.500.500l-7 7" stroke="#9296a3" stroke-width="1" fill="none"/></svg>
<div class="abs" style="left:374px;top:823px;width:215px;height:4px;background:rgba(0,0,0,.13)"></div>

</div></div>
<div id="rstrip">
<svg class="abs" style="left:11px;top:12px" width="18" height="20" viewBox="0 0 18 20"><path d="M9 1.800c-3 0-5 2.300-5 5.200v3.500L2 14.200v1h14v-1l-2-3.700V7c0-2.900-2-5.200-5-5.200zM7.200 17.800h3.600" fill="none" stroke="#6c707e" stroke-width="1.400" stroke-linejoin="round"/></svg>
<div class="abs" style="left:22px;top:12px;width:7px;height:7px;border-radius:50%;background:#4682fa"></div>
<svg class="abs" style="left:11px;top:53px" width="20" height="19" viewBox="0 0 20 19"><g fill="none" stroke="#6c707e" stroke-width="1.300" stroke-linecap="round"><path d="M8.500 9.500c0-1.400-1-2.300-2.300-2.300S4 8.200 4 9.600c0 1.500 1.200 2.600 2.800 2.600M14.500 6.500C14 3.700 11.600 1.500 8.200 1.500 4.300 1.500 1.300 4.300 1.300 8c0 2.600 1.400 4.700 3.700 5.800"/><path d="M11 5.800C10.300 4.900 9.300 4.400 8 4.400"/><path d="M9.500 9h8.500v6.500h-2v2.500l-3-2.500H9.500z" stroke-linejoin="round"/></g></svg>
<div class="abs" style="left:11px;top:89px;font:italic 23px/24px 'Liberation Sans',sans-serif;color:#6c707e">m</div>
</div>

<svg class="abs" style="left:0;top:0;pointer-events:none" width="960" height="827" viewBox="0 0 960 827"><g fill="none" stroke="#f00" stroke-width="1.200">
<rect x="553" y="602.600" width="70.400" height="34.200"/>
<rect x="631" y="608.800" width="34.600" height="23.600"/>
<rect x="672.800" y="609.400" width="150.800" height="23"/>
<rect x="478.400" y="629.400" width="49.200" height="23.200"/>
<rect x="480.600" y="655.800" width="63.800" height="17.600"/>
</g></svg>
<div class="ann" id="a1" style="left:635.79px;letter-spacing:-0.463px;top:491px;font:300 18px/24px 'Liberation Serif','Noto Serif CJK SC',serif">数据库<span style="font:15px/24px 'Liberation Mono',monospace;letter-spacing:0;margin-left:0px">ip</span></div>
<div class="ann" id="a2" style="left:717.29px;letter-spacing:-0.202px;top:526px;font:300 18px/24px 'Liberation Serif','Noto Serif CJK SC',serif">数据库端口</div>
<div class="ann" id="a3" style="left:821.29px;letter-spacing:-0.323px;top:491px;font:300 18px/24px 'Liberation Serif','Noto Serif CJK SC',serif">数据库名称</div>
<div class="ann" id="a4" style="left:531.53px;letter-spacing:0.265px;top:633px;font:16px/24px 'Liberation Sans','Noto Sans CJK SC',sans-serif">数据库用户名</div>
<div class="ann" id="a5" style="left:598.23px;letter-spacing:0.148px;top:656px;font:16px/24px 'Liberation Sans','Noto Sans CJK SC',sans-serif">数据库密码</div>
<svg class="abs" style="left:0;top:0;pointer-events:none" width="960" height="827" viewBox="0 0 960 827"><g stroke="#f00" stroke-width="3" fill="#f00" stroke-linecap="round">
<path d="M632.800 513 594.500 573" fill="none"/><path d="M572 608.200 588.500 569.800 599.400 576.300z" stroke="none"/>
<path d="M710.800 547 672.500 580.500" fill="none"/><path d="M641.250 607.600 668 576.400 676.100 585.500z" stroke="none"/>
<path d="M839 513.500 803.300 566.500" fill="none"/><path d="M779.500 601.400 797.500 563.300 808.300 570.200z" stroke="none"/>
</g></svg>

</body></html>
